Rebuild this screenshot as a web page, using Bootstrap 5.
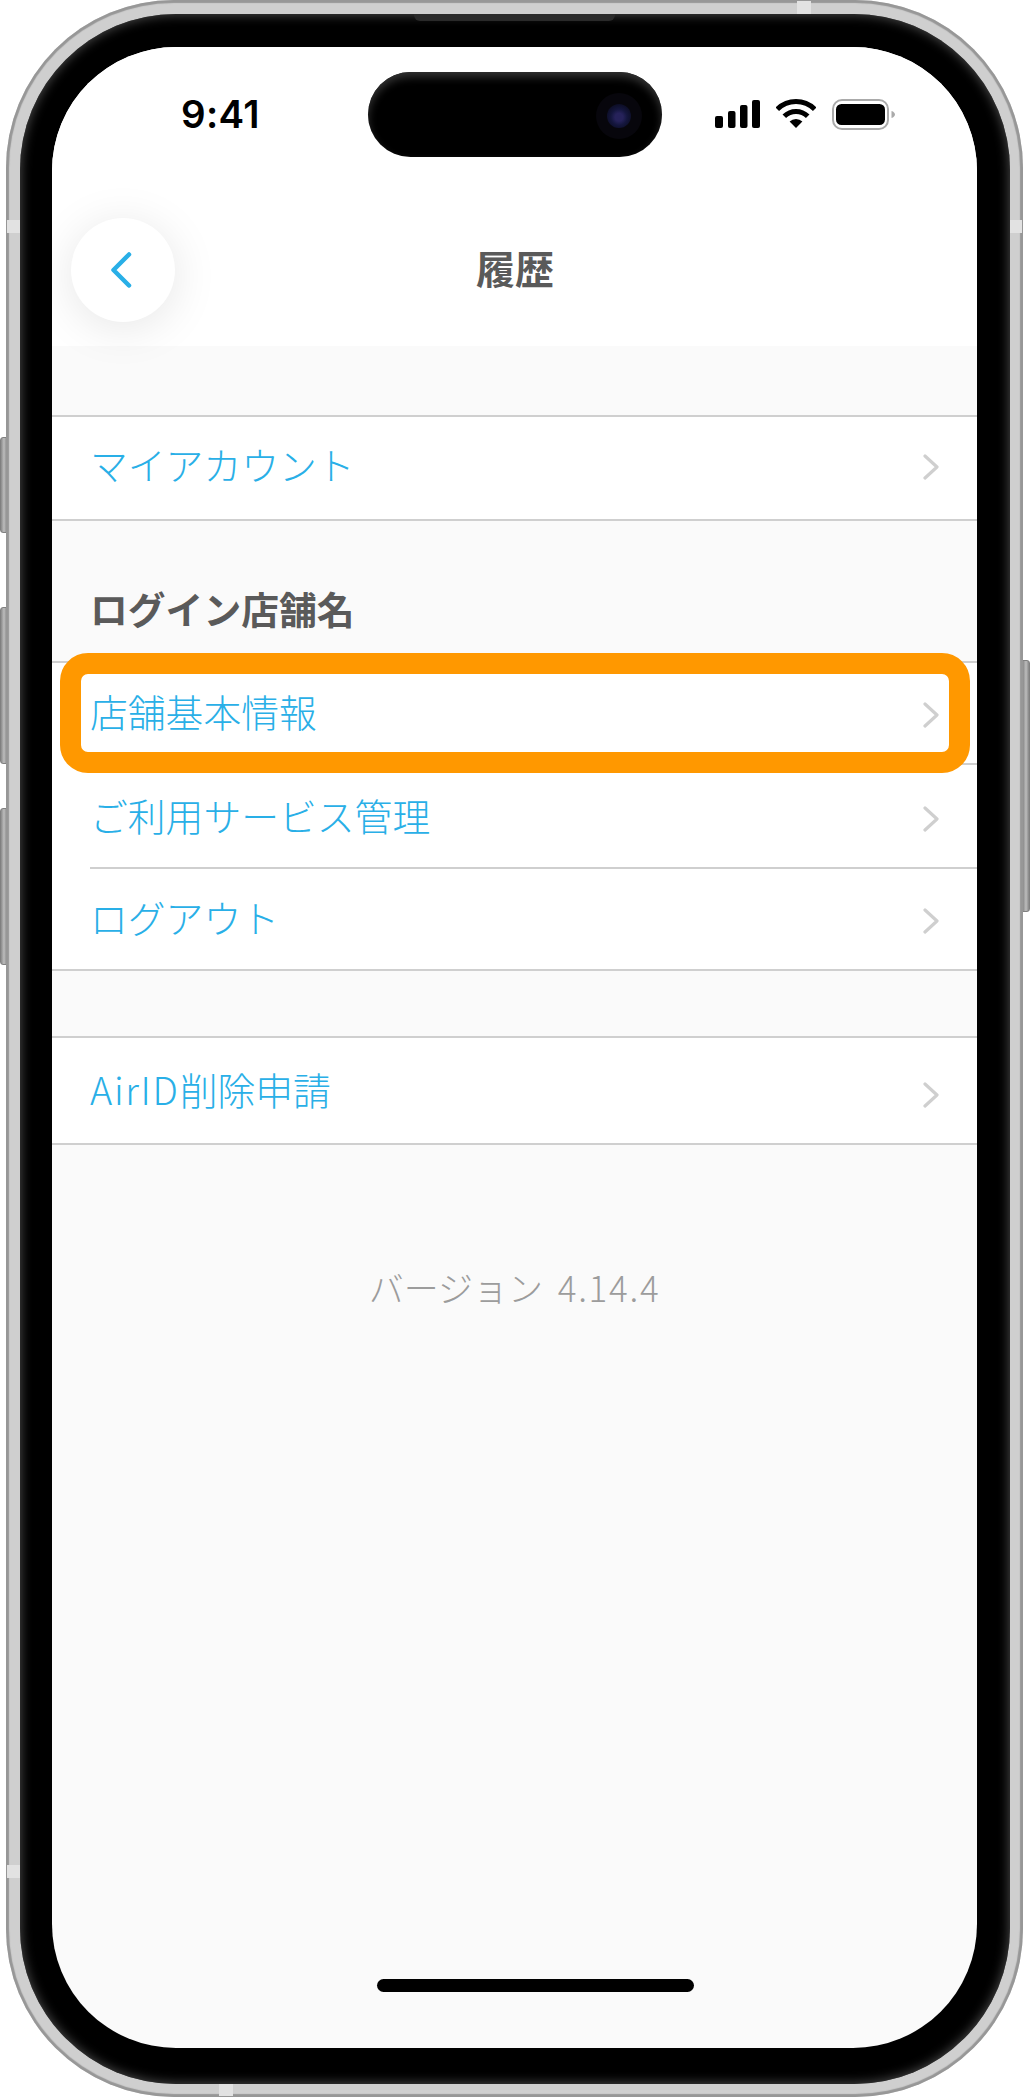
<!DOCTYPE html>
<html lang="ja">
<head>
<meta charset="utf-8">
<title>履歴</title>
<link href="https://cdn.jsdelivr.net/npm/bootstrap@5.3.0/dist/css/bootstrap.min.css" rel="stylesheet">
<style>
html,body{margin:0;background:#fff;width:1030px;height:2098px;overflow:hidden}
body{font-family:"Noto Sans CJK JP","Noto Sans",sans-serif}
.device-wrap{position:relative;width:1030px;height:2098px;padding:0 7px 1px 6px}
.side-key{position:absolute;width:8px;background:linear-gradient(90deg,#8a8a8a,#bdbdbd 50%,#858585);border:1px solid #808080}
.key-mute{left:0;top:437px;height:96px;border-radius:3px 0 0 3px}
.key-up{left:0;top:607px;height:157px;border-radius:3px 0 0 3px}
.key-down{left:0;top:808px;height:157px;border-radius:3px 0 0 3px}
.key-power{right:0;top:660px;height:252px;border-radius:0 3px 3px 0}
.metal{position:relative;z-index:1;height:100%;border-radius:168px;padding:14px 13px 13px 14px;background:#cfcfcf;box-shadow:inset 0 0 1px 3px #979797}
.band{position:absolute;background:#e2e2e2}
.band-l1{left:1px;top:220px;width:13px;height:13px}
.band-r1{right:1px;top:220px;width:13px;height:13px}
.band-t1{left:791px;top:1px;width:14px;height:13px}
.band-b1{left:213px;bottom:1px;width:14px;height:13px}
.band-l2{left:1px;top:1865px;width:13px;height:13px}
.bezel{position:relative;height:100%;background:#000;border-radius:156px;padding:33px 33px 36px 32px;box-shadow:inset 0 0 11px 1px #4a4a4a}
.speaker{position:absolute;left:394px;top:0;width:201px;height:7px;background:#2a2a2a;border-radius:0 0 6px 6px}
.screen{position:relative;height:100%;background:#fafafa;border-radius:124px;overflow:hidden}
.island{position:absolute;left:316px;top:25px;width:294px;height:85px;border-radius:43px;background:#000;box-shadow:inset 0 5px 9px #333;z-index:3}
.cam-ring{position:absolute;right:20px;top:21px;width:46px;height:46px;border-radius:50%;background:#07060c}
.cam-lens{position:absolute;left:11px;top:11px;width:24px;height:24px;border-radius:50%;background:radial-gradient(circle at 50% 55%,#26225a 0 22%,#14163d 45%,#0c0d24 75%)}
.app-head{position:relative;z-index:2;background:#fff;padding-bottom:24px}
.status-row{height:82px;padding:52px 82px 0 129px}
.clock{font-family:Inter,"Liberation Sans",sans-serif;font-weight:600;font-size:38.5px;line-height:30px;color:#000;letter-spacing:.3px}
.nav-grid{display:grid;grid-template-columns:1fr auto 1fr;align-items:center;margin-top:89px;padding-left:19px}
.back-btn{width:104px;height:104px;background:#fff;box-shadow:0 6px 46px rgba(0,0,0,.1)}
.head-title{font-weight:700;font-size:39px;line-height:1;color:#5a5a5a;margin:-6px 0 0;transform:translateX(-9px)}
.menu-box{background:#fff;border-top:2px solid #cfcfcf;border-bottom:2px solid #cfcfcf;--bs-list-group-bg:#fff;--bs-list-group-border-width:0}
.menu-top{margin-top:69px}
.menu-gap{margin-top:65px}
.menu-line{box-sizing:border-box;height:102px;padding:0 38px 0 38px;background:transparent;display:flex;align-items:center;justify-content:space-between;position:relative;border:0}
.line-tall{height:104px}
.line-long{height:105px}
.line-short{height:100px}
.menu-line.rule-below::after{content:"";position:absolute;left:38px;right:0;bottom:0;height:2px;background:#cfcfcf}
.menu-label{font-weight:300;font-size:37.8px;line-height:1;color:#29afe7;margin-top:-3px}
.label-high{margin-top:-9px}
.label-mid{margin-top:-5px}
.latin-part{letter-spacing:1.7px}
.arrow-up{margin-top:-3px}
.arrow-one{margin-top:2px}
.arrow-two{margin-top:4px}
.arrow-far{margin-top:9px}
.group-title{font-weight:700;font-size:37.8px;line-height:1;color:#5a5a5a;margin:0;padding:68px 0 34px 38px}
.ver-note{font-weight:300;font-size:35px;line-height:1;color:#9c9c9c;text-align:center;margin-top:124px}
.ver-num{letter-spacing:1.7px;margin-left:7px}
.focus-frame{position:absolute;left:8px;top:606px;width:910px;height:120px;border:21px solid #ff9800;border-radius:28px;z-index:4;background:transparent;pointer-events:none}
.home-bar{position:absolute;left:325px;bottom:56px;width:317px;height:13px;background:#000;border-radius:7px;z-index:4}
</style>
</head>
<body>
<div class="device-wrap">
  <div class="side-key key-mute"></div>
  <div class="side-key key-up"></div>
  <div class="side-key key-down"></div>
  <div class="side-key key-power"></div>
  <div class="metal">
    <div class="band band-l1"></div><div class="band band-r1"></div><div class="band band-t1"></div><div class="band band-b1"></div><div class="band band-l2"></div>
    <div class="bezel">
      <div class="speaker"></div>
      <div class="screen">
        <div class="island"><div class="cam-ring"><div class="cam-lens"></div></div></div>
        <header class="app-head">
          <div class="status-row d-flex justify-content-between align-items-start">
            <span class="clock">9:41</span>
            <div class="d-flex align-items-start">
              <svg width="45" height="30" viewBox="0 0 45 30" fill="#000" aria-hidden="true"><rect x="0" y="17" width="8" height="12" rx="2"/><rect x="13" y="12" width="7.5" height="17" rx="2"/><rect x="25" y="6" width="7.5" height="23" rx="2"/><rect x="37" y="1" width="8" height="28" rx="2"/></svg>
              <svg class="ms-3" width="40" height="30" viewBox="0 0 40 30" fill="none" aria-hidden="true"><path d="M1.3 10.3A26.5 26.5 0 0 1 38.7 10.3M8.3 17.3A16.5 16.5 0 0 1 31.7 17.3" stroke="#000" stroke-width="5"/><path d="M20 29L13.6 22.6A9 9 0 0 1 26.4 22.6Z" fill="#000"/></svg>
              <svg class="ms-3" width="63" height="32" viewBox="0 0 63 32" fill="none" aria-hidden="true"><rect x="1" y="1" width="55" height="29" rx="9" stroke="#aaa" stroke-width="2"/><rect x="4" y="5" width="49" height="21" rx="5.5" fill="#000"/><path d="M59.5 12C61.6 12.6 63 14 63 15.5S61.6 18.400 59.500 19Z" fill="#aaa"/></svg>
            </div>
          </div>
          <div class="nav-grid">
            <div><a class="back-btn rounded-circle d-flex align-items-center justify-content-center" href="#" aria-label="戻る">
              <svg width="24" height="38" viewBox="0 0 24 38" fill="none" aria-hidden="true"><path d="M18 3.500L2.500 19L18 34.500" stroke="#29afe7" stroke-width="4.500" stroke-linecap="round" stroke-linejoin="round"/></svg>
            </a></div>
            <h1 class="head-title">履歴</h1>
            <div></div>
          </div>
        </header>

        <div class="list-group list-group-flush menu-box menu-top">
          <a class="list-group-item menu-line" href="#"><span class="menu-label label-high">マイアカウント</span><svg class="arrow-up" width="16" height="26" viewBox="0 0 16 26" fill="none" aria-hidden="true"><path d="M2 2L14 13L2 24" stroke="#cfcfcf" stroke-width="3.200" stroke-linecap="round" stroke-linejoin="round"/></svg></a>
        </div>

        <h2 class="group-title">ログイン店舗名</h2>
        <div class="list-group list-group-flush menu-box">
          <a class="list-group-item menu-line rule-below" href="#"><span class="menu-label label-mid">店舗基本情報</span><svg class="arrow-one" width="16" height="26" viewBox="0 0 16 26" fill="none" aria-hidden="true"><path d="M2 2L14 13L2 24" stroke="#cfcfcf" stroke-width="3.200" stroke-linecap="round" stroke-linejoin="round"/></svg></a>
          <a class="list-group-item menu-line line-tall rule-below" href="#"><span class="menu-label">ご利用サービス管理</span><svg class="arrow-two" width="16" height="26" viewBox="0 0 16 26" fill="none" aria-hidden="true"><path d="M2 2L14 13L2 24" stroke="#cfcfcf" stroke-width="3.200" stroke-linecap="round" stroke-linejoin="round"/></svg></a>
          <a class="list-group-item menu-line line-short" href="#"><span class="menu-label">ログアウト</span><svg class="arrow-two" width="16" height="26" viewBox="0 0 16 26" fill="none" aria-hidden="true"><path d="M2 2L14 13L2 24" stroke="#cfcfcf" stroke-width="3.200" stroke-linecap="round" stroke-linejoin="round"/></svg></a>
        </div>

        <div class="list-group list-group-flush menu-box menu-gap">
          <a class="list-group-item menu-line line-long" href="#"><span class="menu-label"><span class="latin-part">AirID</span>削除申請</span><svg class="arrow-far" width="16" height="26" viewBox="0 0 16 26" fill="none" aria-hidden="true"><path d="M2 2L14 13L2 24" stroke="#cfcfcf" stroke-width="3.200" stroke-linecap="round" stroke-linejoin="round"/></svg></a>
        </div>

        <p class="ver-note">バージョン <span class="ver-num">4.14.4</span></p>

        <div class="focus-frame"></div>
        <div class="home-bar"></div>
      </div>
    </div>
  </div>
</div>
<script src="https://cdn.jsdelivr.net/npm/bootstrap@5.3.0/dist/js/bootstrap.bundle.min.js"></script>
</body>
</html>
